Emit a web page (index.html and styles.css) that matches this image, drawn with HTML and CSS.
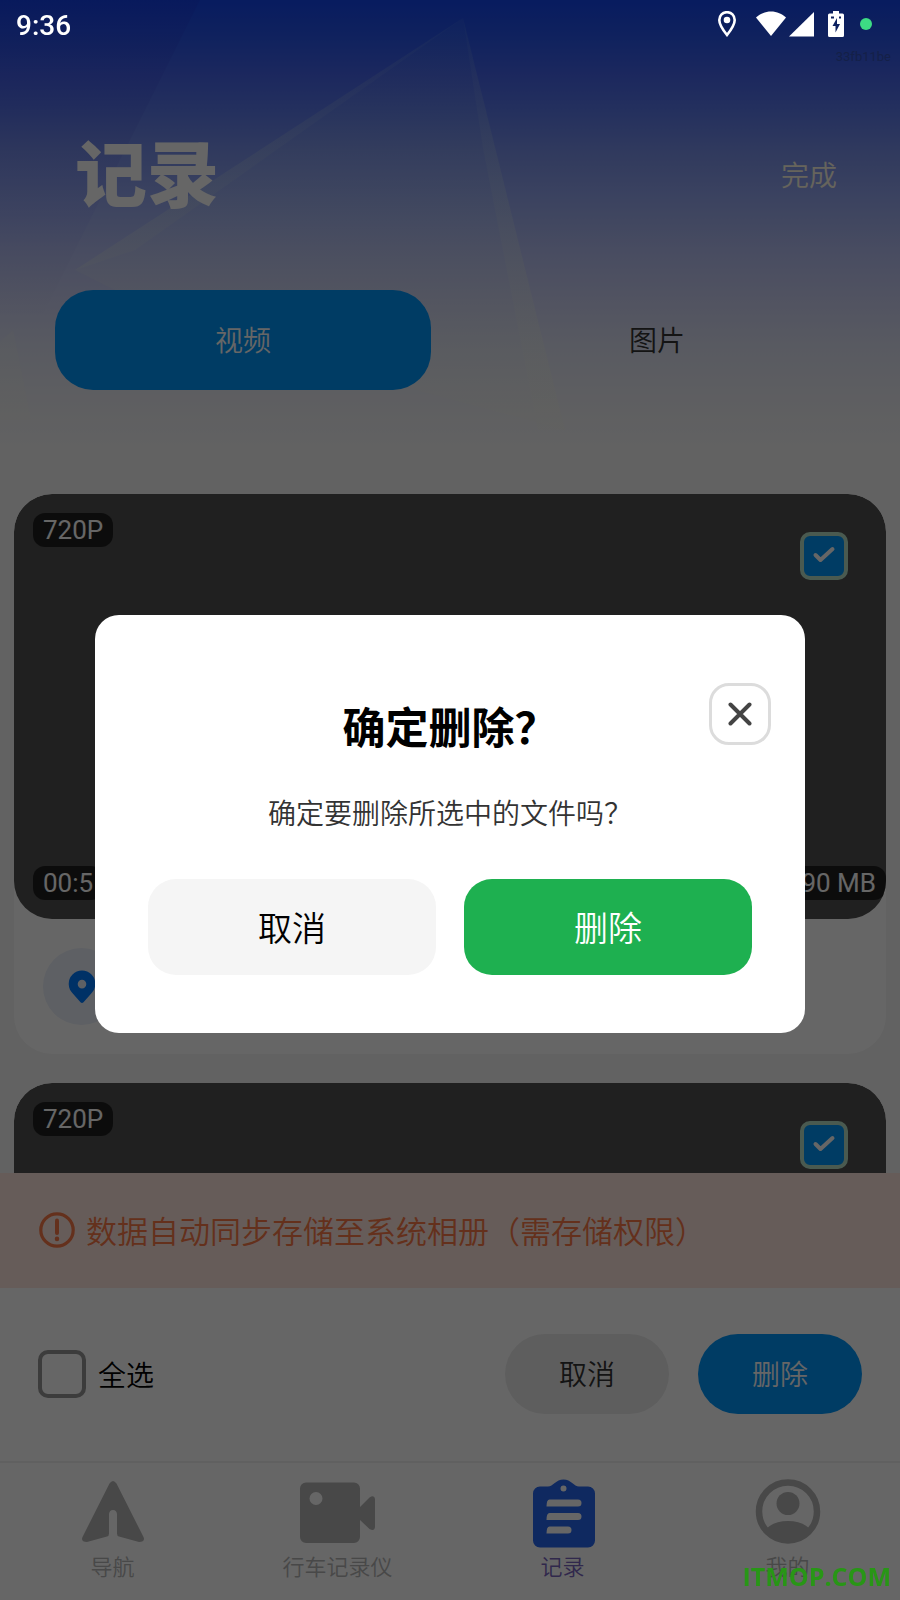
FILE: index.html
```
<!DOCTYPE html>
<html lang="zh-CN">
<head>
    <meta charset="UTF-8">
    <meta name="viewport" content="width=device-width, initial-scale=1.0">
    <title>记录</title>
    <link rel="stylesheet" href="styles.css">
</head>
<body>
    <div class="status-bar">
        <span class="status-time">9:36</span>
        <div class="status-icons">
            <svg class="status-pin" width="18" height="26" viewBox="0 0 18 26">
                <path d="M9 1.200C4.700 1.200 1.300 4.600 1.300 9c0 5.400 7.700 15 7.700 15s7.700-9.600 7.700-15c0-4.400-3.400-7.800-7.700-7.800z" fill="none" stroke="#fff" stroke-width="2.600"/>
                <circle cx="9" cy="9" r="3.300" fill="#fff"/>
            </svg>
            <svg class="status-wifi" width="30" height="26" viewBox="0 0 30 26">
                <path d="M0 6.500C4 3 9 .5 15 .5S26 3 30 6.500L15 25z" fill="#fff"/>
            </svg>
            <svg class="status-signal" width="25" height="26" viewBox="0 0 25 26">
                <path d="M25 1v24.500H0z" fill="#fff"/>
            </svg>
            <svg class="status-battery" width="16" height="26" viewBox="0 0 16 26">
                <path d="M5 0h6v2.500h3.500A1.500 1.500 0 0 1 16 4v20.500a1.500 1.500 0 0 1-1.500 1.500h-13A1.500 1.500 0 0 1 0 24.500V4a1.500 1.500 0 0 1 1.500-1.500H5z" fill="#fff"/>
                <path d="M9 7l-4.500 8H7.500v6.500L12 13H9zM3 5.500h3v2H3zM11 5.500h2v2h-2z" fill="#0c2060"/>
            </svg>
            <span class="status-dot"></span>
        </div>
    </div>

    <div class="app">
        <header class="hero">
            <svg class="hero-beams" viewBox="0 0 900 494" preserveAspectRatio="none">
                <defs>
                    <linearGradient id="beam" gradientUnits="userSpaceOnUse" x1="0" y1="0" x2="0" y2="430">
                        <stop offset="0" stop-color="#c8f0dc" stop-opacity="0.040"/>
                        <stop offset="0.500" stop-color="#e6f5dc" stop-opacity="0.100"/>
                        <stop offset="1" stop-color="#f5f5e6" stop-opacity="0.150"/>
                    </linearGradient>
                    <linearGradient id="shade" x1="0" y1="0" x2="0" y2="1">
                        <stop offset="0" stop-color="#1e14b4" stop-opacity="0.120"/>
                        <stop offset="0.800" stop-color="#1e14b4" stop-opacity="0"/>
                    </linearGradient>
                </defs>
                <path d="M200 0H0v400z" fill="url(#shade)"/>
                <path d="M463 18L75 270l120 60 370 100z" fill="url(#beam)"/>
                <path d="M463 18l20 130 55 282h27z" fill="url(#beam)"/>
                <path d="M463 18L75 270l60-20z" fill="url(#beam)"/>
                <path d="M0 342l13-12 18 90H0z" fill="url(#beam)"/>
            </svg>
            <span class="device-id">33fb11be</span>
            <div class="hero-top">
                <h1 class="hero-title">记录</h1>
                <button class="hero-done" type="button">完成</button>
            </div>
            <div class="tabs">
                <button class="tab active" type="button">视频</button>
                <button class="tab" type="button">图片</button>
            </div>
        </header>

        <main class="video-list">
            <article class="video-card">
                <div class="video-thumb">
                    <div class="thumb-row">
                        <span class="chip">720P</span>
                        <label class="check-box check-green">
                            <input type="checkbox" aria-label="选择视频" checked>
                            <svg viewBox="0 0 48 48"><path d="M15.500 23l5 5 12-11"/></svg>
                        </label>
                    </div>
                    <div class="thumb-row thumb-bottom">
                        <span class="chip">00:5</span>
                        <span class="chip">90 MB</span>
                    </div>
                </div>
                <div class="video-info">
                    <button class="place-button" type="button" aria-label="位置">
                        <svg width="28" height="34" viewBox="0 0 28 34">
                            <path fill-rule="evenodd" d="M14 .5A13.300 13.300 0 0 0 .7 14c0 4.500 2 7.300 4.300 9.700l7.500 8.600q1.500 1.500 3 0L23 23.700c2.300-2.400 4.300-5.200 4.300-9.700A13.300 13.300 0 0 0 14 .5zm0 9.300a4.300 4.300 0 1 1 0 8.600 4.300 4.300 0 0 1 0-8.600z" fill="#007aff"/>
                        </svg>
                    </button>
                </div>
            </article>

            <article class="video-card">
                <div class="video-thumb">
                    <div class="thumb-row">
                        <span class="chip">720P</span>
                        <label class="check-box check-green">
                            <input type="checkbox" aria-label="选择视频" checked>
                            <svg viewBox="0 0 48 48"><path d="M15.500 23l5 5 12-11"/></svg>
                        </label>
                    </div>
                </div>
            </article>
        </main>

        <div class="notice">
            <svg width="36" height="36" viewBox="0 0 36 36" fill="none" stroke="#fa7846" stroke-linecap="round">
                <circle cx="18" cy="18" r="16.200" stroke-width="3.200"/>
                <path d="M18 8.500v12.500" stroke-width="4"/>
                <path d="M18 26.700v.2" stroke-width="4.500"/>
            </svg>
            <span>数据自动同步存储至系统相册（需存储权限）</span>
        </div>

        <div class="select-bar">
            <label class="select-all">
                <span class="check-box">
                    <input type="checkbox">
                    <svg viewBox="0 0 48 48"><path d="M15.500 23l5 5 12-11"/></svg>
                </span>
                全选
            </label>
            <div class="select-actions">
                <button class="pill" type="button">取消</button>
                <button class="pill pill-primary" type="button">删除</button>
            </div>
        </div>

        <nav class="bottom-nav">
            <a class="nav-item" href="#nav">
                <svg width="76" height="72" viewBox="0 0 76 72">
                    <path d="M34.500 5.500q3.500-5 7 0L68.500 59q2 5-4.500 5L44 58.500q-2-.5-2-3V36q-.5-4-4-4t-4 4v19.500q0 2.500-2 3L12 64q-6.500 0-4.500-5z" fill="currentColor"/>
                </svg>
                <span>导航</span>
            </a>
            <a class="nav-item" href="#camera">
                <svg width="76" height="72" viewBox="0 0 76 72">
                    <path fill-rule="evenodd" d="M6 4.500h48a6 6 0 0 1 6 6V29l9.500-9.500q5-3 5.500 1.500v28q-.5 4.500-5.500 2L60 42v17a6 6 0 0 1-6 6H6a6 6 0 0 1-6-6V10.500a6 6 0 0 1 6-6zM16 14a6.500 6.500 0 1 0 0 13 6.500 6.500 0 0 0 0-13z" fill="currentColor"/>
                </svg>
                <span>行车记录仪</span>
            </a>
            <a class="nav-item active" href="#records">
                <svg width="76" height="72" viewBox="0 0 76 72">
                    <path fill-rule="evenodd" d="M15 8.500h8c5 0 8-7 15.500-7s10.500 7 15.500 7h9a7 7 0 0 1 7 7v47a7 7 0 0 1-7 7H15a7 7 0 0 1-7-7v-47a7 7 0 0 1 7-7zM38.500 7.500a3 3 0 1 0 0 6 3 3 0 0 0 0-6zM24.500 21.500q-3 0-3 7H53a3.500 3.500 0 0 0 0-7zM24.500 35q-3 0-3 7H53a3.500 3.500 0 0 0 0-7zM24.500 48.500q-3 0-3 7H43a3.500 3.500 0 0 0 0-7z" fill="#2666f0"/>
                </svg>
                <span>记录</span>
            </a>
            <a class="nav-item" href="#mine">
                <svg width="76" height="72" viewBox="0 0 76 72">
                    <circle cx="38" cy="33.500" r="29" fill="none" stroke="currentColor" stroke-width="6.500"/>
                    <circle cx="38" cy="25.500" r="11.500" fill="currentColor"/>
                    <path d="M16 51q8-8 22-8t22 8q-8 13-22 13t-22-13z" fill="currentColor"/>
                </svg>
                <span>我的</span>
            </a>
        </nav>
    </div>

    <div class="overlay">
        <div class="dialog" role="dialog" aria-modal="true" aria-labelledby="dialog-title">
            <button class="dialog-close" type="button" aria-label="关闭">
                <svg width="24" height="24" viewBox="0 0 24 24"><path d="M2.500 2.500l19 19M21.500 2.500l-19 19"/></svg>
            </button>
            <h2 class="dialog-title" id="dialog-title">确定删除？</h2>
            <p class="dialog-text">确定要删除所选中的文件吗？</p>
            <div class="dialog-actions">
                <button class="dialog-button" type="button">取消</button>
                <button class="dialog-button confirm" type="button">删除</button>
            </div>
        </div>
    </div>

    <span class="watermark">ITMOP.COM</span>
</body>
</html>
```
FILE: styles.css
```
:root {
    --primary-color: #0096fa;
    --page-bg: #f5f5f5;
    --card-bg: #ffffff;
    --thumb-bg: #505050;
    --muted-color: #b4b4b4;
    --notice-color: #fa7846;
    --confirm-color: #1eb050;
}

* {
    box-sizing: border-box;
}

body {
    margin: 0;
    font-family: Roboto, "Noto Sans CJK SC", sans-serif;
    font-size: 28px;
    font-weight: 350;
    color: #000;
    background-color: var(--page-bg);
}

button {
    padding: 0 0 2px;
    border: none;
    background: none;
    font: inherit;
    color: inherit;
    cursor: pointer;
}

/* Status bar */
.status-bar {
    position: absolute;
    top: 0;
    left: 0;
    right: 0;
    z-index: 20;
    display: flex;
    justify-content: space-between;
    align-items: center;
    height: 48px;
    padding: 0 28px 0 16px;
    color: #fff;
}

.status-time {
    padding-top: 2px;
    font-weight: 500;
}

.status-icons {
    display: flex;
    align-items: center;
}

.status-wifi {
    margin-left: 20px;
}

.status-signal {
    margin-left: 3px;
}

.status-battery {
    margin-left: 14px;
}

.status-dot {
    width: 12px;
    height: 12px;
    margin-left: 16px;
    border-radius: 50%;
    background-color: #3ddc84;
}

.app {
    display: flex;
    flex-direction: column;
    height: 100vh;
    overflow: hidden;
}

/* Header */
.hero {
    position: relative;
    flex: none;
    padding: 120px 55px 104px;
    background: linear-gradient(#1446ee 0, #2a56ea 40px, #4664ea 75px, #5a78ea 110px, #7890ea 150px, #96a8f0 200px, #b4bef2 250px, #cbd0f2 300px, #dee2f2 350px, #ebecf2 400px, #f5f5f5 450px);
}

.hero-beams {
    position: absolute;
    top: 0;
    left: 0;
    width: 100%;
    height: 100%;
}

.device-id {
    position: absolute;
    top: 48px;
    right: 9px;
    font-size: 13px;
    font-weight: 400;
    line-height: 18px;
    color: #3250b4;
}

.hero-top {
    position: relative;
    display: flex;
    justify-content: space-between;
    align-items: center;
    height: 110px;
    padding: 0 8px 0 20px;
    color: #fff;
}

.hero-title {
    margin: 0;
    padding-top: 4px;
    font-size: 72px;
    font-weight: 900;
    line-height: 110px;
}

.hero-done {
    color: #fffae6;
}

.tabs {
    position: relative;
    display: flex;
    gap: 38px;
    margin-top: 60px;
}

.tab {
    flex: 1;
    height: 100px;
    border-radius: 38px;
    color: #333;
}

.tab.active {
    background-color: var(--primary-color);
    color: #fff;
}

/* Video list */
.video-list {
    flex: 1;
    min-height: 0;
    overflow: hidden;
    padding: 0 14px;
}

.video-card {
    margin-bottom: 29px;
    border-radius: 38px;
    background-color: var(--card-bg);
    overflow: hidden;
}

.video-thumb {
    display: flex;
    flex-direction: column;
    justify-content: space-between;
    height: 425px;
    padding: 19px 0 19px 19px;
    border-radius: 38px;
    background-color: var(--thumb-bg);
    overflow: hidden;
}

.thumb-row {
    display: flex;
    justify-content: space-between;
    align-items: flex-start;
}

.thumb-row .check-box {
    margin: 19px 38px 0 0;
}

.chip {
    padding: 0 10px;
    border-radius: 12px;
    background-color: rgba(0, 0, 0, 0.6);
    color: #fff;
    font-size: 26px;
    font-weight: 400;
    line-height: 34px;
}

.video-info {
    padding: 29px;
}

.place-button {
    display: flex;
    justify-content: center;
    align-items: center;
    width: 77px;
    height: 77px;
    padding: 0;
    border-radius: 50%;
    background-color: #ebf0fa;
}

/* Check boxes */
.check-box {
    position: relative;
    display: block;
    width: 48px;
    height: 48px;
}

.check-box input {
    appearance: none;
    display: block;
    width: 100%;
    height: 100%;
    margin: 0;
    border: 4px solid #969696;
    border-radius: 10px;
}

.check-box input:checked {
    background-color: var(--primary-color);
}

.check-green input {
    border-color: #b9e1c8;
}

.check-box svg {
    position: absolute;
    top: 0;
    left: 0;
    display: none;
    fill: none;
    stroke: #fff;
    stroke-width: 4;
    stroke-linecap: round;
    stroke-linejoin: round;
}

.check-box input:checked + svg {
    display: block;
}

/* Storage notice */
.notice {
    flex: none;
    display: flex;
    align-items: center;
    gap: 11px;
    height: 115px;
    padding: 0 39px 2px;
    background-color: #ffe6de;
    color: var(--notice-color);
    font-size: 31px;
}

/* Select bar */
.select-bar {
    flex: none;
    display: flex;
    justify-content: space-between;
    align-items: center;
    height: 173px;
    padding: 0 38px 2px;
    background-color: var(--card-bg);
}

.select-all {
    display: flex;
    align-items: center;
    gap: 12px;
}

.select-actions {
    display: flex;
    gap: 29px;
}

.pill {
    width: 164px;
    height: 80px;
    border-radius: 40px;
    background-color: #ebebeb;
    color: #333;
}

.pill-primary {
    background-color: var(--primary-color);
    color: #fff;
}

/* Bottom navigation */
.bottom-nav {
    flex: none;
    display: flex;
    height: 139px;
    padding-top: 15px;
    border-top: 2px solid #f0f0f0;
    background-color: var(--card-bg);
}

.nav-item {
    flex: 1;
    display: flex;
    flex-direction: column;
    align-items: center;
    color: var(--muted-color);
    font-size: 22px;
    line-height: 35px;
    text-decoration: none;
}

.nav-item.active {
    color: #7864be;
}

/* Delete dialog */
.overlay {
    position: fixed;
    top: 0;
    left: 0;
    right: 0;
    bottom: 0;
    z-index: 10;
    display: flex;
    justify-content: center;
    align-items: center;
    padding: 48px 95px 0;
    background-color: rgba(0, 0, 0, 0.6);
}

.dialog {
    position: relative;
    flex: 1;
    padding: 82px 53px 58px;
    border-radius: 24px;
    background-color: #fff;
    text-align: center;
}

.dialog-close {
    position: absolute;
    top: 68px;
    right: 34px;
    display: flex;
    justify-content: center;
    align-items: center;
    width: 62px;
    height: 62px;
    padding: 0;
    border: 3px solid #dcdcdc;
    border-radius: 20px;
}

.dialog-close svg {
    fill: none;
    stroke: #444;
    stroke-width: 4;
    stroke-linecap: round;
}

.dialog-title {
    margin: 0;
    font-size: 43px;
    font-weight: 700;
    line-height: 64px;
}

.dialog-text {
    margin: 34px 0 0;
    line-height: 40px;
    color: #333;
}

.dialog-actions {
    display: flex;
    gap: 28px;
    margin-top: 44px;
}

.dialog-button {
    flex: 1;
    height: 96px;
    border-radius: 28px;
    background-color: #f5f5f5;
    font-size: 34px;
}

.dialog-button.confirm {
    background-color: var(--confirm-color);
    color: #fff;
}

.watermark {
    position: fixed;
    right: 9px;
    bottom: 7px;
    z-index: 30;
    font-family: "Open Sans", sans-serif;
    font-size: 25px;
    font-weight: 700;
    line-height: 34px;
    color: #289616;
}
```
